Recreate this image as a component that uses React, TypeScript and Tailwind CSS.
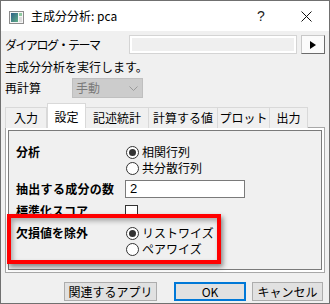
import React from 'react';

function Radio({ checked, label }: { checked?: boolean; label: string }) {
  return (
    <div className="flex items-center h-[16px] gap-[3px]">
      <span className="w-[13px] h-[13px] rounded-full border border-[#333333] bg-white flex items-center justify-center">
        {checked && <span className="w-[7px] h-[7px] rounded-full bg-[#333333]" />}
      </span>
      <span className="leading-[16px]">{label}</span>
    </div>
  );
}

const tabs = [
  { label: '入力', w: 'w-[42px]' },
  { label: '設定', w: 'w-[39px]', active: true },
  { label: '記述統計', w: 'w-[64px]' },
  { label: '計算する値', w: 'w-[70px]' },
  { label: 'プロット', w: 'w-[53px]' },
  { label: '出力', w: 'w-[39px]' },
];

export default function App() {
  return (
    <div className="relative w-[330px] h-[304px] border border-[#707070] bg-[#f0f0f0] flex flex-col text-[12px] text-black font-['Noto_Sans_CJK_JP','Noto_Sans',sans-serif] overflow-hidden">
      {/* title bar */}
      <div className="h-[30px] bg-white flex items-center shrink-0">
        <svg width="15" height="13" viewBox="0 0 15 13" className="ml-[8px] mt-[2px]">
          <defs>
            <linearGradient id="ic" x1="0" y1="0" x2="1" y2="1">
              <stop offset="0" stopColor="#2d5f86" />
              <stop offset="1" stopColor="#5fae86" />
            </linearGradient>
          </defs>
          <rect x="0.5" y="0.5" width="14" height="12" fill="#f6f6f6" stroke="#8c8c8c" />
          <rect x="2" y="2" width="7" height="9" fill="url(#ic)" />
          <rect x="10" y="2" width="3" height="3" fill="#8fcaa0" />
          <rect x="10" y="6" width="3" height="5" fill="#dcdcdc" />
        </svg>
        <span className="ml-[7px] leading-[16px]">主成分分析: pca</span>
        <span className="ml-auto w-[10px] text-center font-['Liberation_Sans',sans-serif] text-[14px] leading-[16px] text-[#222]">?</span>
        <svg width="11" height="11" viewBox="0 0 11 11" className="ml-[35px] mr-[17px]">
          <path d="M0.5 0.5 L10.5 10.5 M10.5 0.5 L0.5 10.5" stroke="#111" strokeWidth="1" />
        </svg>
      </div>

      {/* theme row */}
      <div className="mt-[4px] h-[19px] flex items-center pl-[4px] pr-[4px] shrink-0">
        <span className="leading-[16px] tracking-[-1.5px]">ダイアログ・テーマ</span>
        <div className="ml-auto w-[168px] h-[19px] border border-[#d4d4d4] bg-white p-[2px]">
          <div className="w-full h-full bg-[#efefef]" />
        </div>
        <button className="ml-[4px] w-[24px] h-[19px] bg-[#fbfbfb] border border-[#c8c8c8] border-r-[#6b6b6b] border-b-[#6b6b6b] flex items-center justify-center">
          <svg width="6" height="8" viewBox="0 0 6 8">
            <path d="M0 0 L6 4 L0 8 Z" fill="#000" />
          </svg>
        </button>
      </div>

      <div className="mt-[5px] h-[16px] pl-[4px] leading-[16px] shrink-0">主成分分析を実行します。</div>

      {/* recalc */}
      <div className="mt-[3px] h-[20px] flex items-center pl-[4px] shrink-0">
        <span className="w-[67px] leading-[16px]">再計算</span>
        <div className="w-[71px] h-[20px] bg-[#cccccc] border border-[#bfbfbf] flex items-center pl-[3px] pr-[4px] text-[#7a7a7a]">
          <span className="leading-[16px]">手動</span>
          <svg width="9" height="5" viewBox="0 0 9 5" className="ml-auto">
            <path d="M0.5 0.5 L4.5 4.5 L8.5 0.5" fill="none" stroke="#9a9a9a" />
          </svg>
        </div>
      </div>

      {/* tabs */}
      <div className="mt-[5px] h-[25px] flex items-end pl-[4px] shrink-0 relative z-10">
        {tabs.map((t) =>
          t.active ? (
            <div key={t.label} className={`${t.w} h-[25px] bg-white border border-b-0 border-[#d9d9d9] flex items-center justify-center pt-[2px] leading-[16px]`}>
              {t.label}
            </div>
          ) : (
            <div key={t.label} className={`${t.w} h-[21px] bg-[#f0f0f0] border border-b-0 border-[#d9d9d9] -ml-px first:ml-0 flex items-center justify-center leading-[16px]`}>
              {t.label}
            </div>
          )
        )}
      </div>

      {/* panel */}
      <div className="-mt-px mx-[4px] h-[146px] border border-[#a8a8a8] bg-white p-[2px] shrink-0">
        <div className="h-full border border-[#7a7a7a] bg-[#f0f0f0] pl-[7px] pt-[13px] flex flex-col">
          <div className="flex">
            <span className="w-[110px] font-bold leading-[16px]">分析</span>
            <div className="flex flex-col">
              <Radio checked label="相関行列" />
              <Radio label="共分散行列" />
            </div>
          </div>
          <div className="mt-[4px] h-[18px] flex items-center">
            <span className="w-[109px] font-bold leading-[16px] tracking-[0.3px]">抽出する成分の数</span>
            <div className="w-[120px] h-[18px] bg-white border border-[#7a7a7a] pl-[4px] leading-[16px] font-['Liberation_Sans',sans-serif] text-[13px]">2</div>
          </div>
          <div className="mt-[6px] h-[14px] flex items-center">
            <span className="w-[109px] font-bold leading-[16px]">標準化スコア</span>
            <span className="w-[13px] h-[13px] bg-white border border-[#333333]" />
          </div>
          <div className="mt-[7px] flex">
            <span className="w-[110px] font-bold leading-[16px]">欠損値を除外</span>
            <div className="flex flex-col">
              <Radio checked label="リストワイズ" />
              <Radio label="ペアワイズ" />
            </div>
          </div>
        </div>
      </div>

      {/* buttons */}
      <div className="mt-[9px] h-[19px] flex pl-[63px] shrink-0">
        <button className="w-[93px] h-[19px] bg-[#e1e1e1] border border-[#adadad] leading-[16px]">関連するアプリ</button>
        <button className="ml-[17px] w-[72px] h-[19px] bg-[#e1e1e1] border-2 border-[#0078d7] leading-[14px]">OK</button>
        <button className="ml-[6px] w-[71px] h-[19px] bg-[#e1e1e1] border border-[#adadad] leading-[16px]">キャンセル</button>
      </div>

      {/* annotation highlight */}
      <div className="absolute left-[6px] top-[213px] w-[214px] h-[50px] border-[4px] border-[#ff0000] shadow-[2px_3px_5px_rgba(0,0,0,0.45),inset_2px_3px_5px_rgba(0,0,0,0.3)] pointer-events-none" />
    </div>
  );
}
